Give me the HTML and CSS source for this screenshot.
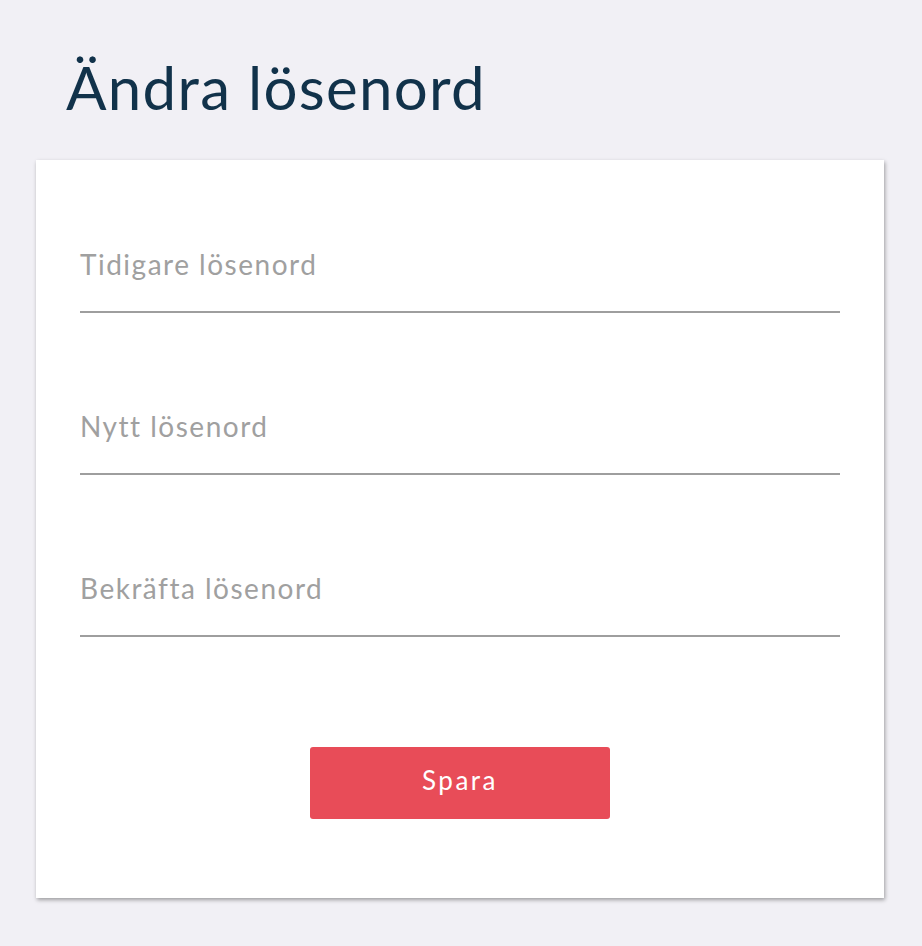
FILE: index.html
```html
<!DOCTYPE html>
<html lang="sv">
<head>
<meta charset="utf-8">
<title>Ändra lösenord</title>
<link rel="stylesheet" href="styles.css">
</head>
<body>
<main class="page">
  <h1 class="title">Ändra lösenord</h1>
  <form class="card">
    <label class="field"><span class="field-label">Tidigare lösenord</span></label>
    <label class="field"><span class="field-label">Nytt lösenord</span></label>
    <label class="field"><span class="field-label">Bekräfta lösenord</span></label>
    <div class="actions"><button type="button" class="btn">Spara</button></div>
  </form>
</main>
</body>
</html>
```
FILE: styles.css
```css
* { box-sizing: border-box; }
html, body { margin: 0; padding: 0; }
body {
  background: #f1f0f5;
  font-family: Lato, "Open Sans", sans-serif;
  min-height: 946px;
}
.page {
  padding: 52px 38px 40px 36px;
}
.title {
  margin: 0 0 0 30px;
  font-size: 60px;
  line-height: 70px;
  font-weight: 400;
  letter-spacing: 1.3px;
  color: #11324a;
  height: 108px;
}
.card {
  background: #fff;
  padding: 88px 44px 79px;
  box-shadow: 1px 2px 4px rgba(0,0,0,0.35);
  display: flex;
  flex-direction: column;
}
.field {
  display: block;
  border-bottom: 2px solid #9e9e9e;
  padding-bottom: 31px;
}
.field + .field { margin-top: 97px; }
.field-label {
  display: block;
  font-size: 28px;
  line-height: 32px;
  color: #a0a0a0;
  font-weight: 400;
  letter-spacing: 1.5px;
}
.actions {
  display: flex;
  justify-content: center;
  margin-top: 110px;
}
.btn {
  width: 300px;
  height: 72px;
  border: 0;
  border-radius: 3px;
  background: #e84c58;
  color: #fff;
  font-family: inherit;
  font-size: 26px;
  font-weight: 400;
  letter-spacing: 2.5px;
  padding: 0 0 6px;
}
```
